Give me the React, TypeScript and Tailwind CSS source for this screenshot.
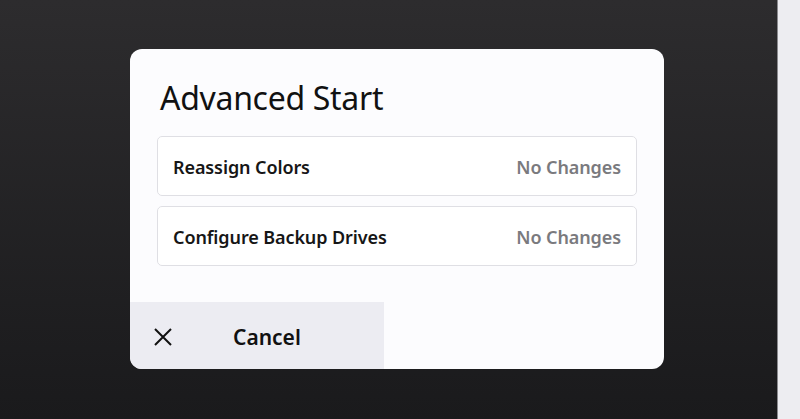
export default function App() {
  const rows = ["Reassign Colors", "Configure Backup Drives"];

  return (
    <div
      className="flex h-[419px] w-[800px] overflow-hidden"
      style={{ fontFamily: '"Noto Sans", Inter, sans-serif' }}
    >
      {/* dimmed backdrop */}
      <div className="flex flex-1 flex-col bg-gradient-to-b from-[#2d2c2e] to-[#1a1a1c] pl-[130px] pt-[49px]">
        <div className="flex h-[320px] w-[534px] flex-col overflow-hidden rounded-[12px] bg-[#fcfcfe]">
          <h1 className="pl-[30px] pt-[29px] text-[32px] leading-[40px] font-normal tracking-[-0.3px] text-[#111]">
            Advanced Start
          </h1>

          <div className="mt-[18px] flex flex-col gap-[10px] px-[27px]">
            {rows.map((label) => (
              <div
                key={label}
                className="flex h-[60px] items-center justify-between rounded-[5px] border border-[#dfdfe4] bg-white px-[15px] pt-[2px]"
              >
                <span className="text-[18px] font-semibold tracking-[-0.1px] text-[#161616]">{label}</span>
                <span className="text-[18px] font-semibold tracking-[-0.1px] text-[#7a7a7e]">No Changes</span>
              </div>
            ))}
          </div>

          <div className="mt-auto flex">
            <button className="flex h-[67px] w-[254px] items-center bg-[#ececf2] pl-[24px] pt-[2px]">
              <svg width="18" height="18" viewBox="0 0 18 18" fill="none" stroke="#111" strokeWidth="2">
                <path d="M1 1l16 16M17 1L1 17" />
              </svg>
              <span className="ml-[61px] pt-[2px] text-[21px] font-semibold text-[#111]">Cancel</span>
            </button>
          </div>
        </div>
      </div>

      {/* right edge panel */}
      <div className="w-[23px] border-l border-[#8a8a8e] bg-[#ededf1]" />
    </div>
  );
}
